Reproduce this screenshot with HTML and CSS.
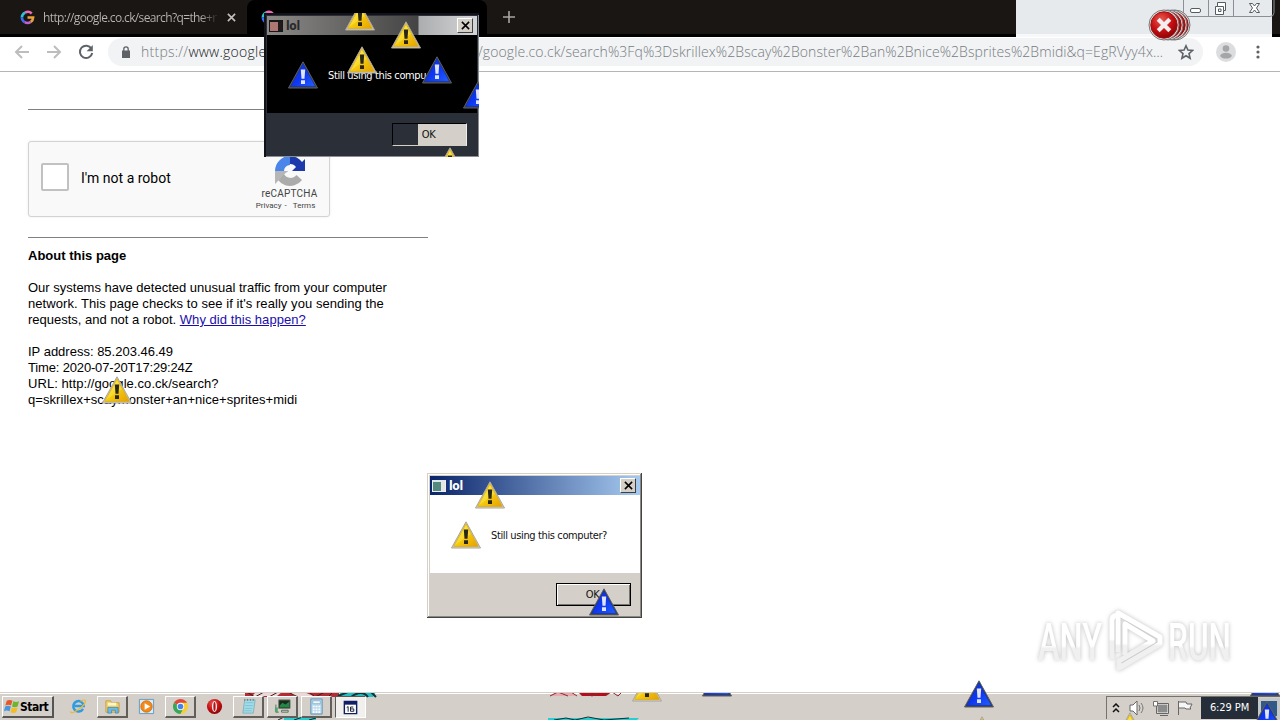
FILE: index.html
```html
<!DOCTYPE html>
<html lang="en">
  <head>
    <meta charset="UTF-8" />
    <title>http://google.co.ck/search</title>
    <link rel="stylesheet" href="styles.css">
  </head>
  <body>
    <svg class="defs" aria-hidden="true">
      <defs>
        <linearGradient id="gold" x1="0" y1="0" x2="1" y2="1">
          <stop offset="0" stop-color="#fff04a" />
          <stop offset=".5" stop-color="#f6cb10" />
          <stop offset="1" stop-color="#e5a000" />
        </linearGradient>
        <linearGradient id="blue" x1="0" y1="0" x2="1" y2="1">
          <stop offset="0" stop-color="#1230d8" />
          <stop offset=".5" stop-color="#0e35f0" />
          <stop offset="1" stop-color="#2460ff" />
        </linearGradient>
        <linearGradient id="fade" x1="0" y1="0" x2="0" y2="1">
          <stop offset=".55" stop-color="#fff" />
          <stop offset=".6" stop-color="#f0f0f0" />
        </linearGradient>
        <radialGradient id="red" cx=".4" cy=".3" r=".7">
          <stop offset="0" stop-color="#e85a50" />
          <stop offset=".6" stop-color="#c50f12" />
          <stop offset="1" stop-color="#8f0508" />
        </radialGradient>
      </defs>
      <symbol id="warn" viewBox="0 0 30 28">
        <path d="M15 .8 29.500 27H.5z" fill="#d8d4cc" stroke="#aaa598" stroke-linejoin="round" />
        <path d="M15 2.800 27.400 25.400H2.600z" fill="url(#gold)" stroke="#d3a713" stroke-width=".7" />
        <path d="M15 4.500 4 24 20 13z" fill="#fff36a" opacity=".35" />
        <path d="M12.800 8.500h4.400l-.7 9.300h-3zM13 19.200h4v3.800h-4z" fill="#292719" />
      </symbol>
      <symbol id="info" viewBox="0 0 30 28">
        <path d="M15 .8 29.500 27H.5z" fill="#3b3e43" stroke="#5c6064" stroke-linejoin="round" />
        <path d="M15 2.800 27.400 25.400H2.600z" fill="url(#blue)" stroke="#1837a3" stroke-width=".7" />
        <path d="M12.800 8.500h4.400l-.7 9.300h-3zM13 19.200h4v3.800h-4z" fill="#dfe4ff" />
      </symbol>
      <symbol id="gee" viewBox="0 0 16 16">
        <g fill="none" stroke-width="2.8">
          <path d="M12.5 3.7A6 6 0 0 0 5.4 2.8" stroke="#ef6ab4" />
          <path d="M5.4 2.8A6 6 0 0 0 2 8" stroke="#2ac6d5" />
          <path d="M2 8a6 6 0 0 0 3 5" stroke="#416bf5" />
          <path d="M5 13a6 6 0 0 0 6.5-.3" stroke="#c05fd0" />
          <path d="M11.5 12.7A6 6 0 0 0 14 8H8" stroke="#e7a13c" />
        </g>
      </symbol>
      <symbol id="stop" viewBox="0 0 32 32">
        <circle cx="16" cy="16" r="15" fill="#e1dede" stroke="#777" />
        <circle cx="16" cy="16" r="13.2" fill="url(#red)" stroke="#a01010" />
        <path d="m10.2 10.2 11.6 11.6m0-11.6L10.2 21.8" stroke="#f4eeee" stroke-width="4.2" />
      </symbol>
    </svg>

    <div class="desktop">
      <div class="tabstrip">
        <div class="tab">
          <svg class="favicon"><use href="#gee" /></svg>
          <span class="tab-title">http://google.co.ck/search?q=the+r</span>
          <svg class="tab-close" viewBox="0 0 10 10"><path d="m1 1 8 8m0-8L1 9" /></svg>
        </div>
        <div class="tab active">
          <svg class="favicon"><use href="#gee" /></svg>
        </div>
        <svg class="new-tab" viewBox="0 0 12 12"><path d="M6 0v12M0 6h12" /></svg>
        <div class="caption">
          <svg class="window-buttons" viewBox="0 0 92 17">
            <path d="M.5 0v16.5H87q4 0 4-4V0M25.500 0v16M50.500 0v16" fill="none" stroke="#8c9096" />
            <rect x="7.500" y="8.500" width="10" height="4" rx="1.500" fill="#fff" stroke="#555b63" />
            <path d="M34.500 2.500h8v8h-2v4h-8v-8h2z" fill="#fff" stroke="#555b63" />
            <path d="M34.500 6.500h6v4M35.500 9h2.500v2.500h-2.500z" fill="none" stroke="#555b63" />
            <path d="M66.500 3.500h3l2 2.500 2-2.500h3L73.500 8l3 4.500h-3l-2-2.500-2 2.500h-3l3-4.500z" fill="#fff" stroke="#555b63" />
          </svg>
        </div>
      </div>

      <div class="toolbar">
        <svg class="nav muted" viewBox="0 0 16 16"><path d="M15 8H2m6-6L2 8l6 6" /></svg>
        <svg class="nav muted" viewBox="0 0 16 16"><path d="M1 8h13M8 2l6 6-6 6" /></svg>
        <svg class="nav" viewBox="0 0 16 16">
          <path d="M13.400 4.600A6.200 6.200 0 1 0 14.200 9" />
          <path d="M14.800 1v6.200H8.600z" class="solid" />
        </svg>
        <div class="omnibox">
          <svg class="lock" viewBox="0 0 10 12">
            <path d="M1 4.500h8V12H1z" fill="#5f6368" />
            <path d="M2.800 5V3a2.200 2.200 0 0 1 4.400 0v2" fill="none" stroke="#5f6368" stroke-width="1.300" />
          </svg>
          <span class="host"><i>https://</i>www.google</span>
          <span class="path">/google.co.ck/search%3Fq%3Dskrillex%2Bscay%2Bonster%2Ban%2Bnice%2Bsprites%2Bmidi&amp;q=EgRVyy4x…</span>
          <svg class="star" viewBox="0 0 16 16"><path d="m8 1.800 1.900 4.300 4.600.4-3.500 3.100 1.100 4.600L8 11.700l-4.100 2.500L5 9.600 1.500 6.500l4.600-.4z" /></svg>
        </div>
        <svg class="avatar" viewBox="0 0 20 20">
          <circle cx="10" cy="10" r="10" fill="#dcdddf" />
          <circle cx="10" cy="6.500" r="3.300" fill="#a5a6a8" />
          <ellipse cx="10" cy="13.700" rx="5.800" ry="2.900" fill="#a5a6a8" />
        </svg>
        <svg class="menu" viewBox="0 0 4 14"><circle cx="2" cy="2" r="1.600" /><circle cx="2" cy="7" r="1.600" /><circle cx="2" cy="12" r="1.600" /></svg>
      </div>

      <main class="page">
        <hr>
        <div class="recaptcha">
          <div class="checkbox"></div>
          <span class="robot">I'm not a robot</span>
          <div class="brand">
            <svg class="brand-logo" viewBox="0 0 32 32">
              <path d="M16 5.500A10.500 10.500 0 0 0 5.500 16" fill="none" stroke="#4a86ea" stroke-width="9" />
              <path d="M16 1a15 15 0 0 1 12 6l3-3v12H18l4-4a7 7 0 0 0-6-3z" fill="#1c3aa9" />
              <path d="M1 16a15 15 0 0 0 27 9l-5.500-5a7.500 7.500 0 0 1-12.500-1l4-3z" fill="#ababab" />
              <path d="M1 16v13l4-4 5-6 4-3z" fill="#b6b6b6" />
            </svg>
            <div class="brand-name">reCAPTCHA</div>
            <div class="brand-links"><span>Privacy</span><span>-</span><span>Terms</span></div>
          </div>
        </div>
        <hr>
        <div class="about">
          <b>About this page</b>
          <p>Our systems have detected unusual traffic from your computer<br><span class="wide">network. This page checks to see if it's really you sending the</span><br>requests, and not a robot. <a href="#">Why did this happen?</a></p>
          <p>IP address: 85.203.46.49<br><span class="tight">Time: 2020-07-20T17:29:24Z</span><br><span class="wide">URL: http://google.co.ck/search?</span><br><span class="wide">q=skrillex+scaymonster+an+nice+sprites+midi</span></p>
        </div>
      </main>

      <div class="taskbar">
        <div class="start">
          <svg viewBox="0 0 18 18">
            <path d="M4 3q3-2 6 0L8.500 8q-3-1.500-6 0z" fill="#e5572a" />
            <path d="M11 3.500q3 1.500 6 0L15.500 9q-3 1.500-6 0z" fill="#6fb52c" />
            <path d="M2.300 9q3-1.500 6 0L7 14q-3-1.500-6 0z" fill="#4598df" />
            <path d="M9.300 10q3 1.500 6 0L14 15q-3 1.500-6 0z" fill="#f4bb22" />
          </svg>
          <b>Start</b>
        </div>
        <div class="task plain"><svg viewBox="0 0 18 18">
          <path d="M13.800 11.500A5.500 5.500 0 1 1 14.500 8.500H5" fill="none" stroke="#2f9be0" stroke-width="2.600" />
          <path d="M1 14Q0 16 3 15.500 16 9 16.500 3 15 1 11 3.500" fill="none" stroke="#e9b93a" stroke-width="1.200" />
        </svg></div>
        <div class="task"><svg viewBox="0 0 18 18">
          <path d="M2 3h5l1 2h8v10H2z" fill="#f0cf67" stroke="#c9a044" />
          <path d="M4 5h9v3H4z" fill="#fff8cf" />
          <path d="M4 16v-6h11v6h-3v-3H8v3z" fill="#6db9e5" stroke="#387faa" stroke-width=".7" />
        </svg></div>
        <div class="task plain"><svg viewBox="0 0 18 18">
          <path d="M1.500 1.500h15v15h-15z" fill="#d8ebf7" stroke="#639bc6" />
          <circle cx="9" cy="9" r="6" fill="#f28b19" stroke="#d56a09" />
          <path d="m7 5.500 6 3.500-6 3.500z" fill="#fff" />
        </svg></div>
        <div class="task"><svg viewBox="0 0 18 18">
          <path d="M9 9 2.100 5a8 8 0 0 1 13.800 0z" fill="#df493a" />
          <path d="M9 9 2.100 5A8 8 0 0 0 9 17l4-6z" fill="#3aa757" />
          <path d="M9 9h4L9 17A8 8 0 0 0 15.900 5H9z" fill="#f8ce36" />
          <circle cx="9" cy="9" r="3.900" fill="#fff" /><circle cx="9" cy="9" r="3" fill="#4583e9" />
        </svg></div>
        <div class="task plain"><svg viewBox="0 0 18 18">
          <circle cx="9" cy="9" r="8" fill="url(#red)" /><ellipse cx="9" cy="9" rx="2.700" ry="5.800" fill="#eee" /><ellipse cx="9" cy="9" rx="1.200" ry="4.800" fill="#b81114" />
        </svg></div>
        <div class="task"><svg viewBox="0 0 18 18">
          <path d="M5 2h11l-2 14H3z" fill="#a2dce9" stroke="#7fb2bd" />
          <path d="M6 5h8m-8.500 3h8M5 11h8m-8.500 2.500h8" stroke="#7dc0d2" /><path d="M5 1v2m3-2v2m3-2v2m3-2v2" stroke="#777" />
        </svg></div>
        <div class="task"><svg viewBox="0 0 18 18">
          <path d="M5 2h12v9H5z" fill="#152d19" stroke="#777" /><path d="m6 8 3-3 3 2 4-3v6H6z" fill="#258547" />
          <path d="M8 13h7v2H8zM2 7v8h3" fill="none" stroke="#53705a" /><path d="M1 10h3v5H1z" fill="#52a66a" />
        </svg></div>
        <div class="task"><svg viewBox="0 0 18 18">
          <path d="M3 1h12v16H3z" fill="#b7d8ec" stroke="#5d92b5" /><path d="M5 3h8v3H5z" fill="#eff8ff" stroke="#6a99b8" stroke-width=".6" />
          <path d="M5 9h8M5 12h8M5 15h8" stroke="#fff" stroke-width="1.800" stroke-dasharray="2 1" />
        </svg></div>
        <div class="task pressed"><svg viewBox="0 0 18 18">
          <path d="M2.500 2.500h13v13h-13z" fill="#fff" stroke="#101e65" stroke-width="1.500" /><path d="M2.500 2.500h13v3.500h-13z" fill="#101e65" />
          <path d="m5 9 1.500-1v5.500M9 13V8.500h3M9 13h3.500v-2.500H9" fill="none" stroke="#161a2e" />
        </svg></div>
        <div class="tray">
          <svg class="chevrons" viewBox="0 0 8 10"><path d="m1 4 3-3 3 3M1 9l3-3 3 3" fill="none" stroke="#111" stroke-width="1.500" /></svg>
          <svg class="tray-icon" viewBox="0 0 18 16"><path d="M2 5h3l4-4v14l-4-4H2z" fill="#fff" stroke="#666" /><path d="M11 5q2 3 0 6m2-8q4 5 0 10" fill="none" stroke="#777" /></svg>
          <svg class="tray-icon" viewBox="0 0 18 16"><path d="M5 4h11v9H5z" fill="#8c8c8c" stroke="#fff" /><path d="M4.500 3.500h12v10h-12zM8 15.500h8M2.500 1v5" fill="none" stroke="#666" /><path d="M1.500 1.500h4V6h-4z" fill="#fff" stroke="#666" stroke-width=".9" /></svg>
          <svg class="tray-icon" viewBox="0 0 18 16"><path d="M2.500 1v14M3 2h7l1 2h5l-2 4 1 1h-5L9 8H3" fill="#f6f6f6" stroke="#666" /></svg>
          <span class="clock">6:29 PM</span>
          <span class="show-desktop"></span>
        </div>
        <svg class="taskbar-art" viewBox="0 0 600 28">
          <g>
            <path d="M1 0h94v5H1z" fill="#b52b34" /><path d="M12 0h26l-5 4H8zM45 0h15l12 5H52z" fill="#ead7d8" />
            <path d="m3 0 8 5L20 0m5 5 9-5m10 0 10 5M65 0l6 5 10-5m3 5 5-5" fill="none" stroke="#47171e" />
            <path d="M96 0h36l-3 5H95z" fill="#21bfc5" /><path d="m94 4 10-4m3 5q11-8 17 0m3-5 5 5" fill="none" stroke="#103238" stroke-width="2" />
          </g>
          <path d="M40 25h32v3H40z" fill="#25ced0" /><path d="m34 28 8-4m8 4 12-4m3 4 7-2" fill="none" stroke="#1a2529" />
          <path d="M306 4 312 0h16l4 4z" fill="#e7a9ae" /><path d="M334 0h34l-6 4h-24z" fill="#b50e1b" />
          <path d="m306 4 8-4 10 4m3-4 6 4m7-4 8 4 8-4m5 4 4-4m3 0 6 4 4-4" fill="none" stroke="#8d2836" />
          <path d="M304 26h91l-2 2h-89z" fill="#25ced0" /><path d="m310 28 12-2 9 2 13-3 16 3 25-2" fill="none" stroke="#172b2f" />
        </svg>
        <svg class="sprite s-task1"><use href="#warn" /></svg>
        <svg class="sprite s-task2"><use href="#info" /></svg>
        <svg class="sprite s-task4"><use href="#info" /></svg>
        <svg class="sprite s-task5"><use href="#warn" /></svg>
        <svg class="sprite s-task6"><use href="#warn" /></svg>
        <svg class="sprite s-task7"><use href="#info" /></svg>
      </div>

      <div class="dialog dark">
        <div class="titlebar">
          <span class="app-icon"></span><b>lol</b>
          <span class="close"><svg viewBox="0 0 10 10"><path d="m1 1 8 8m0-8L1 9" /></svg></span>
        </div>
        <div class="message"><svg class="icon"><use href="#info" /></svg><span>Still using this compu</span></div>
        <div class="footer"><div class="ok">OK</div></div>
        <svg class="sprite s-dark1"><use href="#warn" /></svg>
        <svg class="sprite s-dark2"><use href="#warn" /></svg>
        <svg class="sprite s-dark3"><use href="#warn" /></svg>
        <svg class="sprite s-dark4"><use href="#info" /></svg>
        <svg class="sprite s-dark5"><use href="#info" /></svg>
        <svg class="sprite s-dark6"><use href="#warn" /></svg>
      </div>

      <div class="dialog light">
        <div class="titlebar">
          <span class="app-icon"></span><b>lol</b>
          <span class="close"><svg viewBox="0 0 10 10"><path d="m1 1 8 8m0-8L1 9" /></svg></span>
        </div>
        <div class="message"><svg class="icon"><use href="#warn" /></svg><span>Still using this computer?</span></div>
        <div class="footer"><div class="ok">OK</div></div>
        <svg class="sprite s-light1"><use href="#warn" /></svg>
        <svg class="sprite s-light2"><use href="#info" /></svg>
      </div>

      <svg class="sprite s-page"><use href="#warn" /></svg>
      <svg class="sprite s-task3"><use href="#info" /></svg>

      <svg class="errors" viewBox="0 0 46 34">
        <use href="#stop" x="11" y="1" width="32" height="32" />
        <use href="#stop" x="8" y="1" width="32" height="32" />
        <use href="#stop" x="4" y="1" width="32" height="32" />
        <use href="#stop" x="0" y="1" width="32" height="32" />
      </svg>

      <svg class="watermark" viewBox="0 0 204 70">
        <g fill="none" stroke="url(#fade)" stroke-width="5" stroke-linejoin="round">
          <path d="M78 54V15q0-4 5-5" />
          <path d="M84 47V8l42 24v7L85 63v-7l34-20-28-17v31" />
        </g>
        <g class="letters">
          <text x="4" y="55" textLength="64" lengthAdjust="spacingAndGlyphs">ANY</text>
          <text x="134" y="55" textLength="63" lengthAdjust="spacingAndGlyphs">RUN</text>
        </g>
      </svg>
    </div>
  </body>
</html>
```
FILE: styles.css
```css
* {
  box-sizing: border-box;
}

body {
  margin: 0;
  background: #fff;
  overflow: hidden;
}

.defs {
  position: absolute;
  width: 0;
  height: 0;
}

.desktop {
  position: relative;
  width: 1280px;
  height: 720px;
  overflow: hidden;
  display: flex;
  flex-direction: column;
  font-family: "DejaVu Sans Condensed", "DejaVu Sans", sans-serif;
  font-stretch: condensed;
}

svg {
  display: block;
  flex: none;
}

/* Browser chrome */
.tabstrip {
  display: flex;
  height: 37px;
  flex: none;
  background: #1a1613;
  border-bottom: 3px solid #000;
}

.tab {
  display: flex;
  align-items: center;
  width: 247px;
  height: 34px;
  padding-left: 20px;
}

.favicon {
  width: 15px;
  height: 15px;
}

.tab-title {
  width: 178px;
  margin-left: 8px;
  white-space: nowrap;
  font: 12px "Open Sans", sans-serif;
  letter-spacing: -0.63px;
  word-spacing: 0;
  color: transparent;
  background: linear-gradient(90deg, #bab6b3 88%, #1a1613 99%);
  background-clip: text;
}

.tab-close {
  width: 9px;
  height: 9px;
  margin-left: 6px;
  fill: none;
  stroke: #c4c0bc;
  stroke-width: 1.8;
}

.tab.active {
  width: 240px;
  padding-left: 14px;
  background: #000;
  border-radius: 8px 8px 0 0;
}

.new-tab {
  width: 12px;
  height: 12px;
  margin: 11px 0 0 16px;
  stroke: #aaa5a0;
  stroke-width: 1.6;
}

.caption {
  width: 256px;
  height: 37px;
  margin: 0 8px 0 auto;
  background: #e7eaed;
  border-bottom: 3px solid #f7f8f9;
}

.window-buttons {
  width: 92px;
  height: 17px;
  margin-left: 167px;
}

.toolbar {
  display: flex;
  align-items: center;
  height: 35px;
  flex: none;
  padding: 0 16px 4px 14px;
  border-bottom: 1px solid #b4b6b5;
  background: #fff;
}

.nav {
  width: 16px;
  height: 16px;
  margin-right: 16px;
  fill: none;
  stroke: #5f6368;
  stroke-width: 2;
}

.nav.muted {
  stroke: #bbbdbf;
}

.nav .solid {
  fill: #5f6368;
  stroke: none;
}

.omnibox {
  display: flex;
  align-items: center;
  width: 1095px;
  height: 28px;
  margin-left: -2px;
  padding-left: 13px;
  border-radius: 14px;
  background: #f1f3f4;
  font: 300 14px/20px "Open Sans", sans-serif;
  color: #202124;
  white-space: nowrap;
}

.lock {
  width: 10px;
  height: 12px;
}

.host {
  width: 337px;
  margin-left: 10px;
  letter-spacing: 0.25px;
}

.host i {
  font-style: normal;
  color: #777b80;
}

.path {
  width: 698px;
  letter-spacing: 0.08px;
  color: #777b80;
}

.star {
  width: 16px;
  height: 16px;
  margin-left: 2px;
  fill: none;
  stroke: #5f6368;
  stroke-width: 1.6;
}

.avatar {
  width: 20px;
  height: 20px;
  margin-left: 13px;
}

.menu {
  width: 4px;
  height: 14px;
  margin-left: 20px;
  fill: #5f6368;
}

/* Captcha page */
.page {
  flex: 1;
  padding: 37px 28px 0;
  font: 13px/16px "Liberation Sans", Arial, sans-serif;
  color: #000;
}

.page hr {
  width: 400px;
  height: 1px;
  margin: 0;
  border: 0;
  background: #808080;
}

.recaptcha {
  display: flex;
  align-items: center;
  width: 302px;
  height: 76px;
  margin: 31px 0 20px;
  padding: 0 7px 0 12px;
  border: 1px solid #d3d3d3;
  border-radius: 3px;
  background: #f9f9f9;
  box-shadow: 0 0 3px rgba(0, 0, 0, 0.08);
}

.checkbox {
  width: 28px;
  height: 28px;
  margin-bottom: 4px;
  border: 2px solid #c1c1c1;
  border-radius: 2px;
  background: #fff;
}

.robot {
  margin: -2px 0 0 12px;
  font: 14px/17px Roboto, sans-serif;
}

.brand {
  display: flex;
  flex-direction: column;
  align-items: center;
  width: 70px;
  margin: 9px 0 0 auto;
  font-family: Roboto, sans-serif;
  color: #444;
}

.brand-logo {
  width: 32px;
  height: 32px;
  margin-left: 5px;
}

.brand-name {
  margin-left: 5px;
  font-size: 10px;
  line-height: 13px;
  letter-spacing: 0.2px;
}

.brand-links {
  display: flex;
  gap: 3px;
  margin-left: -3px;
  font-size: 8px;
  line-height: 12px;
}

.brand-links span:last-child {
  margin-left: 3px;
}

.about {
  margin-top: 10px;
  white-space: nowrap;
}

.about p {
  margin: 16px 0 0;
}

.about a {
  color: #1a0dab;
  letter-spacing: 0.05px;
}

.about .wide {
  letter-spacing: 0.06px;
}

.about .tight {
  letter-spacing: -0.16px;
}

/* Message boxes */
.dialog {
  position: absolute;
  display: flex;
  flex-direction: column;
  width: 215px;
  height: 145px;
  padding: 3px 2px 2px 3px;
  overflow: hidden;
  font-size: 11px;
  line-height: 14px;
  letter-spacing: -0.37px;
}

.dialog.dark {
  left: 264px;
  top: 13px;
  height: 144px;
  background: #2b2f37;
  box-shadow: inset 2px 2px #111318, inset -1px -1px #8b8f93;
  color: #fff;
}

.dialog.light {
  left: 427px;
  top: 473px;
  background: #d6d0c9;
  box-shadow: inset -1px -1px #444, inset 1px 1px #d4d0c8, inset -2px -2px #8c8882, inset 2px 2px #fff;
  color: #111;
}

.titlebar {
  display: flex;
  align-items: center;
  height: 19px;
  flex: none;
  padding: 0 4px 0 2px;
  font-size: 12px;
  color: #fff;
  background: linear-gradient(90deg, #0a246a, #a6caf0);
}

.dark .titlebar {
  color: #292929;
  background: linear-gradient(90deg, #8b8a87, #444 151px, #abadae 152px, #d3d5d6);
}

.app-icon {
  width: 14px;
  height: 12px;
  margin-right: 3px;
  border: 1px solid #eee;
  border-top: 2px solid #dfe8e8;
  background: linear-gradient(90deg, #528a80 70%, #e5e5e5 70%);
}

.dark .app-icon {
  border-color: #181818;
  background: linear-gradient(90deg, #ae7774 65%, #201a1a 65%);
}

.close {
  display: flex;
  align-items: center;
  justify-content: center;
  width: 16px;
  height: 15px;
  margin: -1px 0 0 auto;
  border: 1px solid #fff;
  border-right-color: #404040;
  border-bottom-color: #404040;
  background: #d4d0c8;
}

.close svg {
  width: 9px;
  height: 9px;
  fill: none;
  stroke: #000;
  stroke-width: 1.7;
}

.message {
  display: flex;
  align-items: center;
  height: 78px;
  flex: none;
  padding: 2px 0 0 21px;
  background: #fff;
  white-space: nowrap;
}

.dark .message {
  background: #000;
}

.message .icon {
  width: 30px;
  height: 28px;
  margin-right: 10px;
}

.message span {
  margin-top: 1px;
}

.footer {
  display: flex;
  align-items: center;
  justify-content: flex-end;
  flex: 1;
  padding-right: 9px;
  background: #d4cfc8;
}

.dark .footer {
  padding-right: 10px;
  background: #2b2f37;
}

.ok {
  width: 75px;
  height: 23px;
  padding-right: 2px;
  border: 1px solid #000;
  box-shadow: inset 1px 1px #fff, inset -1px -1px #77736e;
  text-align: center;
  line-height: 21px;
  color: #111;
}

.dark .ok {
  border-color: #000 #eee #d4d0c8 #000;
  background: linear-gradient(90deg, #2b2f37 25px, #d4cfc8 25px);
  box-shadow: none;
}

/* Icons left behind by the cursor */
.sprite {
  position: absolute;
  width: 30px;
  height: 28px;
}

.s-dark1 { left: 81px; top: -10px; }
.s-dark2 { left: 127px; top: 8px; }
.s-dark3 { left: 83px; top: 33px; }
.s-dark4 { left: 158px; top: 43px; }
.s-dark5 { left: 199px; top: 68px; }
.s-dark6 { left: 171px; top: 134px; }
.s-light1 { left: 48px; top: 8px; }
.s-light2 { left: 162px; top: 115px; }
.s-page { left: 102px; top: 376px; }
.s-task1 { left: 632px; top: -19px; }
.s-task2 { left: 702px; top: -24px; }
.s-task3 { left: 964px; top: 680px; }
.s-task4 { left: 1250px; top: -24px; }
.s-task5 { left: 967px; top: 23px; }
.s-task6 { left: 1115px; top: 19px; z-index: 2; }
.s-task7 { left: 1252px; top: 8px; }

.errors {
  position: absolute;
  left: 1148px;
  top: 8px;
  width: 46px;
  height: 34px;
}

.watermark {
  position: absolute;
  left: 1034px;
  top: 605px;
  width: 204px;
  height: 70px;
  overflow: visible;
  filter: drop-shadow(0 0 2px rgba(0, 0, 0, 0.26));
}

.letters {
  fill: url(#fade);
  font: 500 52px Roboto, sans-serif;
}

/* Taskbar */
.taskbar {
  position: relative;
  display: flex;
  align-items: flex-start;
  height: 28px;
  flex: none;
  padding: 3px 0 0 2px;
  overflow: hidden;
  border-top: 1px solid #d4d0c8;
  box-shadow: inset 0 1px #fff;
  background: #d4cfc8;
}

.start {
  display: flex;
  align-items: center;
  width: 52px;
  height: 22px;
  margin-right: 9px;
  border: 1px solid #fff;
  border-right: 2px solid #555;
  border-bottom: 2px solid #555;
  font-size: 12px;
  letter-spacing: -0.5px;
}

.start svg {
  width: 17px;
  height: 17px;
}

.task {
  display: flex;
  align-items: center;
  justify-content: center;
  width: 31px;
  height: 22px;
  margin-right: 3px;
  border: 1px solid #fff;
  border-right: 2px solid #625f5b;
  border-bottom: 2px solid #625f5b;
  background: #d4cfc8;
  z-index: 1;
}

.task svg {
  width: 17px;
  height: 17px;
}

.task.plain {
  border-color: transparent;
  background: none;
}

.task.pressed {
  border: 1px solid #5c5955;
  border-right-color: #fff;
  border-bottom-color: #fff;
  background: #f2f0ed;
}

.tray {
  display: flex;
  align-items: center;
  width: 174px;
  height: 23px;
  margin-left: auto;
  padding-left: 5px;
  border-top: 1px solid #76736e;
  border-left: 1px solid #76736e;
}

.chevrons {
  width: 8px;
  height: 10px;
  margin-right: 8px;
}

.tray-icon {
  width: 18px;
  height: 16px;
  margin-right: 6px;
}

.clock {
  width: 57px;
  height: 22px;
  margin-left: 1px;
  background: #252d38;
  color: #fff;
  text-align: center;
  font-size: 11px;
  line-height: 22px;
  letter-spacing: -0.1px;
}

.show-desktop {
  flex: 1;
  height: 21px;
  border: 3px solid #c6c8c8;
  background: #315887;
}

.taskbar-art {
  position: absolute;
  left: 244px;
  top: -1px;
  width: 600px;
  height: 28px;
}
```
